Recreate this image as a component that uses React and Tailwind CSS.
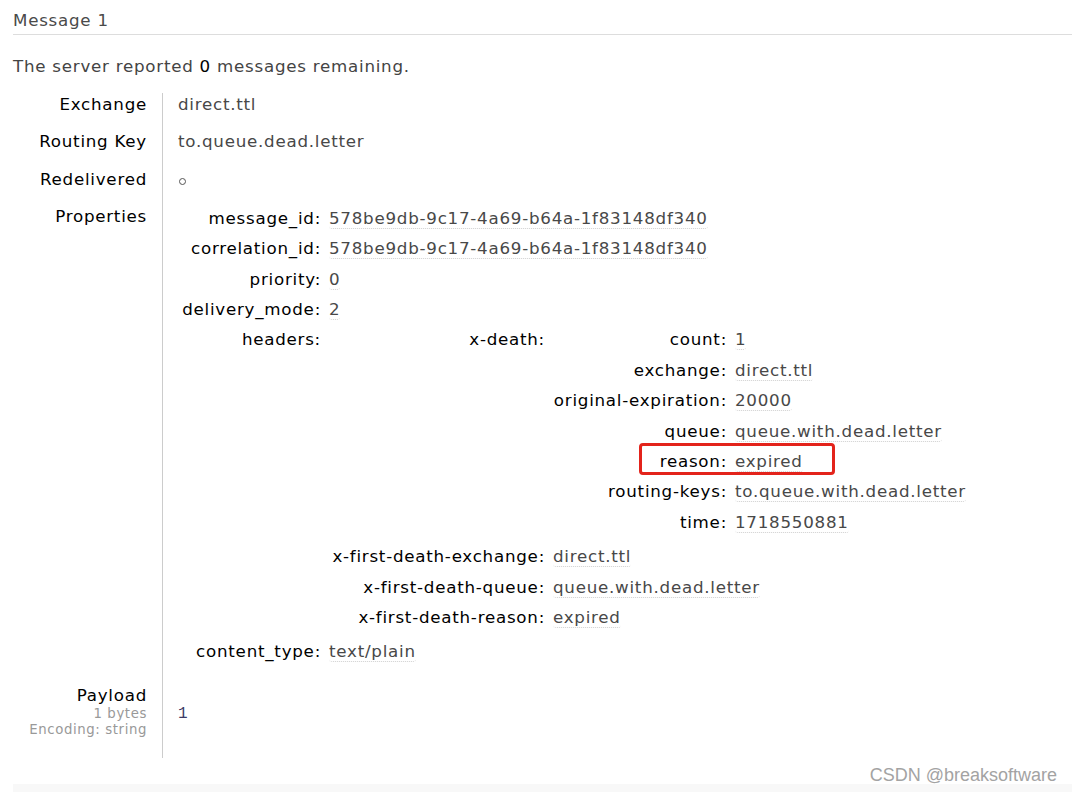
import React from "react";

const Val = ({ children }) => (
  <span className="border-b border-dotted border-[#cfcfcf] rounded-[3px] text-[#484848]">
    {children}
  </span>
);

// leaf row of a nested key/value table
const KV = ({ k, v }) => (
  <>
    <div className="text-right text-black leading-[22px] pt-[2px] pb-[6.4px] whitespace-nowrap">
      {k}:
    </div>
    <div className="leading-[22px] pt-[2px] pb-[6.4px] whitespace-nowrap">
      <Val>{v}</Val>
    </div>
  </>
);

const Row = ({ label, sub, children, labelClass = "", valueClass = "" }) => (
  <div className="flex">
    <div className={`w-[149px] shrink-0 pr-[15px] text-right ${labelClass}`}>
      <div className="leading-[22px] text-black">{label}</div>
      {sub}
    </div>
    <div className={`flex-1 border-l border-[#cccccc] pl-[15px] ${valueClass}`}>
      {children}
    </div>
  </div>
);

export default function App() {
  return (
    <div className="relative min-h-[792px] bg-white pl-[13px] text-[16.7px] tracking-[0.75px] text-[#484848] overflow-hidden font-['DejaVu_Sans',Verdana,sans-serif]">
      <h2 className="pt-[9px] pb-[3px] leading-[22px] border-b border-[#dddddd] text-[#4a4a4a]">
        Message 1
      </h2>

      <p className="mt-[20px] leading-[22px] text-[#444]">
        The server reported <span className="text-black">0</span> messages remaining.
      </p>

      <div className="mt-[16px]">
        <Row label="Exchange" valueClass="leading-[22px] pb-[15.3px]">
          direct.ttl
        </Row>
        <Row label="Routing Key" valueClass="leading-[22px] pb-[15.3px]">
          to.queue.dead.letter
        </Row>
        <Row label="Redelivered" valueClass="h-[37.3px] pt-[10px]">
          <span className="block ml-[1px] w-[7px] h-[7px] rounded-full border border-[#555]" />
        </Row>
        <Row label="Properties" valueClass="pb-[15px]">
          <div className="grid grid-cols-[143px_auto] gap-x-[8px] justify-start">
            <KV k="message_id" v="578be9db-9c17-4a69-b64a-1f83148df340" />
            <KV k="correlation_id" v="578be9db-9c17-4a69-b64a-1f83148df340" />
            <KV k="priority" v="0" />
            <KV k="delivery_mode" v="2" />

            <div className="text-right text-black leading-[22px] pt-[2px]">headers:</div>
            <div className="pb-[4px]">
              <div className="grid grid-cols-[216px_auto] gap-x-[8px] justify-start">
                <div className="text-right text-black leading-[22px] pt-[2px]">x-death:</div>
                <div className="pb-[4px]">
                  <div className="grid grid-cols-[174px_auto] gap-x-[8px] justify-start">
                    <KV k="count" v="1" />
                    <KV k="exchange" v="direct.ttl" />
                    <KV k="original-expiration" v="20000" />
                    <KV k="queue" v="queue.with.dead.letter" />
                    <KV k="reason" v="expired" />
                    <KV k="routing-keys" v="to.queue.with.dead.letter" />
                    <KV k="time" v="1718550881" />
                  </div>
                </div>
                <KV k="x-first-death-exchange" v="direct.ttl" />
                <KV k="x-first-death-queue" v="queue.with.dead.letter" />
                <KV k="x-first-death-reason" v="expired" />
              </div>
            </div>

            <KV k="content_type" v="text/plain" />
          </div>
        </Row>
        <Row
          label="Payload"
          labelClass="pb-[19px]"
          sub={
            <div className="text-[13.3px] leading-[16.5px] tracking-[0.6px] text-[#999]">
              <div>1 bytes</div>
              <div>Encoding: string</div>
            </div>
          }
          valueClass="pt-[19px]"
        >
          <pre className="text-[16px] leading-[22px] tracking-normal text-[#3d3a66] font-['Liberation_Mono',monospace]">
            1
          </pre>
        </Row>
      </div>

      <div className="mt-[26px] h-[24px] bg-[#f8f8f8]" />

      {/* annotation box */}
      <div className="absolute left-[639px] top-[443px] w-[196px] h-[32px] border-[3px] border-[#e3231b] rounded-[4px]" />

      <div className="absolute right-[15px] top-[764px] text-[18px] leading-[22px] tracking-normal text-[#a3a3a3] font-['Liberation_Sans',Arial,sans-serif]">
        CSDN @breaksoftware
      </div>
    </div>
  );
}
